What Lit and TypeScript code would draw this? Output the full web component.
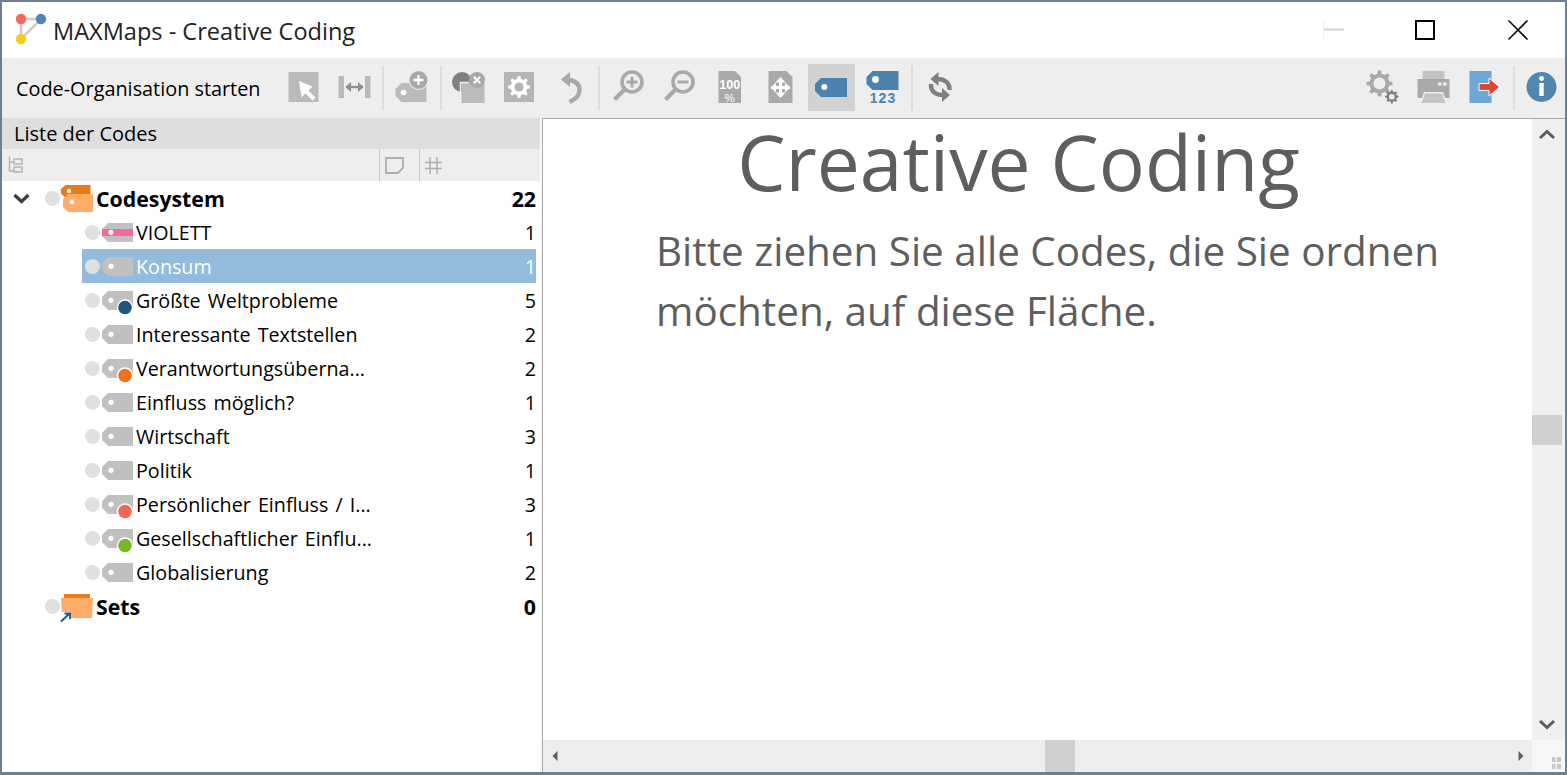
import { LitElement, html, svg, css } from "lit";
import { customElement } from "lit/decorators.js";

function gear(cx: number, cy: number, ro: number, ri: number, teeth: number): string {
  const pts: string[] = [];
  const step = (Math.PI * 2) / teeth;
  for (let i = 0; i < teeth; i++) {
    const a = i * step - Math.PI / 2;
    const offs: [number, number][] = [[-0.27, ri], [-0.17, ro], [0.17, ro], [0.27, ri]];
    for (const [o, r] of offs) {
      const t = a + o * step;
      pts.push(`${(cx + Math.cos(t) * r).toFixed(2)},${(cy + Math.sin(t) * r).toFixed(2)}`);
    }
  }
  return pts.join(" ");
}

const TAG = "M6 0H31V19H6L0 13V6Z";

type Row = { name: string; n: number; dot?: string; stripe?: string; sel?: boolean };
const rows: Row[] = [
  { name: "VIOLETT", n: 1, stripe: "#ee6a9f" },
  { name: "Konsum", n: 1, sel: true },
  { name: "Größte Weltprobleme", n: 5, dot: "#1f5582" },
  { name: "Interessante Textstellen", n: 2 },
  { name: "Verantwortungsüberna...", n: 2, dot: "#ee7218" },
  { name: "Einfluss möglich?", n: 1 },
  { name: "Wirtschaft", n: 3 },
  { name: "Politik", n: 1 },
  { name: "Persönlicher Einfluss / I...", n: 3, dot: "#f26852" },
  { name: "Gesellschaftlicher Einflu...", n: 1, dot: "#76b82a" },
  { name: "Globalisierung", n: 2 },
];

@customElement("app-root")
export class AppRoot extends LitElement {
  static styles = css`
    :host { display: block; width: 100%; height: 100vh; overflow: hidden; background: #fff; }
    * { box-sizing: border-box; }
    svg { display: block; overflow: visible; }
    .win {
      height: 100vh; display: flex; flex-direction: column;
      border: 2px solid #6f7f93; border-bottom-width: 3px;
      font-family: "Open Sans", "Noto Sans", sans-serif; color: #000; background: #fff;
    }
    .titlebar { height: 56px; flex: none; display: flex; align-items: center; background: #fff; }
    .logo { margin-left: 12px; width: 36px; height: 36px; flex: none; }
    .title { margin-left: 3px; font-size: 23.55px; color: #222; flex: 1; margin-top: 1px; }
    .wbtns { display: flex; align-items: center; margin-right: 37px; }
    .wbtn { width: 20px; height: 20px; }
    .wbtn.min { margin-right: 71px; }
    .wbtn.max { margin-right: 73px; }
    .toolbar {
      height: 60px; flex: none; background: #eeeeee; display: flex; align-items: center;
      padding-right: 0.5px; padding-bottom: 1px;
    }
    .tool-label { width: 277.5px; padding-left: 14px; font-size: 19.85px; flex: none; white-space: nowrap; margin-top: 2px; }
    .grp { display: flex; flex: none; }
    .g50 { gap: 3px; }
    .g505 { gap: 3.5px; }
    .g51 { gap: 4px; }
    .tb { width: 47px; height: 47px; flex: none; }
    .tb.on { background: #d2d2d2; }
    .sep { width: 2px; height: 44px; margin: 0 4px 0 5px; background: #dedede; flex: none; }
    .sep.b { margin-right: 3px; }
    .spacer { flex: 1; }
    .body { flex: 1; display: flex; min-height: 0; }
    .left { width: 538px; flex: none; display: flex; flex-direction: column; }
    .panel-head { height: 31px; flex: none; background: #dedede; padding-left: 12px; display: flex; align-items: center; font-size: 20px; }
    .col-head { height: 32px; flex: none; background: #eeeeee; display: flex; align-items: stretch; }
    .col-tree { width: 377px; padding: 7px 0 0 6px; flex: none; }
    .col { border-left: 1px solid #c8c8c8; flex: none; }
    .col.note { width: 40px; padding: 8px 0 0 5px; }
    .col.hash { flex: 1; padding: 8px 0 0 5px; }
    .tree { flex: 1; padding-right: 4px; }
    .row { height: 34px; display: flex; align-items: center; font-size: 19.7px; word-spacing: 2px; white-space: nowrap; }
    .row.top { font-weight: 700; padding-left: 11px; font-size: 21.3px; }
    .row.sub { margin-left: 80px; padding-left: 3px; }
    .row.sel { background: #92bbdd; color: #fff; }
    .chev { width: 17px; flex: none; }
    .circ { width: 15px; height: 15px; border-radius: 50%; background: #e0e0e0; flex: none; }
    .top .circ { margin-left: 15px; }
    .top .noch { margin-left: 32px; }
    .ticon { width: 31px; height: 19px; flex: none; margin-left: 2px; }
    .ficon { width: 32px; height: 28px; flex: none; margin-left: 1px; margin-right: 3px; }
    .nm { margin-left: 3px; flex: 1; }
    .top .nm { margin-left: 0; }
    .n { text-align: right; }
    .gut { width: 2px; flex: none; background: #f9f9f9; }
    .main { flex: 1; min-width: 0; display: flex; flex-direction: column; border-left: 1px solid #a8a8a8; border-top: 1px solid #a8a8a8; }
    .mid { flex: 1; display: flex; min-height: 0; }
    .canvas { flex: 1; min-width: 0; color: #5e5e5e; }
    .h1 { font-size: 76.7px; line-height: 84px; text-align: center; padding-right: 38px; font-weight: 400; }
    .p { margin: 18px 0 0 113px; font-size: 40.4px; line-height: 60px; width: 860px; }
    .vs { width: 33px; flex: none; background: #f0f0f0; display: flex; flex-direction: column; align-items: center; justify-content: space-between; padding: 10px 3px 10px 0; }
    .vthumb { width: 30px; height: 30px; background: #d0d0d0; }
    .hbar { height: 32px; flex: none; display: flex; background: #eeeeee; }
    .hs { flex: 1; display: flex; align-items: center; justify-content: space-between; padding: 0 8px 0 9px; }
    .hthumb { width: 30px; height: 32px; background: #d0d0d0; position: relative; left: 22px; }
    .corner { width: 33px; flex: none; background: #f7f7f7; display: flex; align-items: flex-end; justify-content: flex-end; padding: 0 3px 3px 0; }
  `;

  private logo() {
    return html`<svg class="logo" viewBox="0 0 36 36">
      <path d="M7 7H27M7 7V27M27 7L7 27" stroke="#cdcdcd" stroke-width="2.5" fill="none"/>
      <circle cx="7" cy="7" r="5.2" fill="#f2685a"/>
      <circle cx="27" cy="7" r="5.2" fill="#4f86b5"/>
      <circle cx="7" cy="27" r="5.2" fill="#f2cd1c"/>
    </svg>`;
  }

  private zoomIcon(plus: boolean) {
    return html`<svg class="tb" viewBox="0 0 47 47">
      <circle cx="28" cy="18" r="10" fill="none" stroke="#a9a9a9" stroke-width="3.6"/>
      <path d="M21 25L10.5 35.5" stroke="#a9a9a9" stroke-width="4.2"/>
      <path d="${plus ? "M22.5 18H33.5M28 12.5V23.5" : "M22.5 18H33.5"}" stroke="#a9a9a9" stroke-width="3"/>
    </svg>`;
  }

  private toolbar() {
    return html`<div class="toolbar">
      <div class="tool-label">Code-Organisation starten</div>
      <div class="grp g50">
        <svg class="tb" viewBox="0 0 47 47">
          <rect x="8.5" y="8" width="30" height="30" fill="#bababa"/>
          <path d="M19 17L21.5 33.5L25.5 29.5L32.5 36.5L35.5 33.5L28.5 26.5L32.5 22.5Z" fill="#fff"/>
        </svg>
        <svg class="tb" viewBox="0 0 47 47">
          <rect x="8.5" y="12" width="5.5" height="22" fill="#b9b9b9"/>
          <rect x="35" y="12" width="5.5" height="22" fill="#b9b9b9"/>
          <path d="M16 23H33" stroke="#8f8f8f" stroke-width="2.4"/>
          <path d="M15.5 23L21 18V28ZM33.5 23L28 18V28Z" fill="#8f8f8f"/>
        </svg>
      </div>
      <div class="sep"></div>
      <svg class="tb" viewBox="0 0 47 47">
        <path d="M13.5 19H38.5V38H13.5L7.5 32V25Z" fill="#bbbbbb"/>
        <circle cx="15.5" cy="28.5" r="2.8" fill="#fff"/>
        <circle cx="30.5" cy="16" r="10" fill="#eeeeee"/>
        <circle cx="30.5" cy="16" r="9" fill="#a9a9a9"/>
        <path d="M25.5 16H35.5M30.5 11V21" stroke="#fff" stroke-width="2.4"/>
      </svg>
      <div class="sep b"></div>
      <div class="grp g505">
        <svg class="tb" viewBox="0 0 47 47">
          <circle cx="17" cy="18" r="10" fill="#808080"/>
          <path d="M16.5 39V19H39.5V39Z" fill="#bbbbbb"/>
          <path d="M15.5 28V18.5H24" stroke="#eeeeee" stroke-width="1.5" fill="none"/>
          <circle cx="32" cy="16" r="8" fill="#a9a9a9"/>
          <path d="M28.8 12.8L35.2 19.2M35.2 12.8L28.8 19.2" stroke="#fff" stroke-width="2"/>
        </svg>
        <svg class="tb" viewBox="0 0 47 47">
          <rect x="9" y="8" width="30" height="30" fill="#b5b5b5"/>
          <polygon points="${gear(24, 23, 11, 8.4, 8)}" fill="#fff"/>
          <circle cx="24" cy="23" r="4.6" fill="#b5b5b5"/>
        </svg>
        <svg class="tb" viewBox="0 0 47 47">
          <path d="M19 15.5C29 16 33.5 20 33.5 26C33.5 32 29 35.5 23.5 38" stroke="#a9a9a9" stroke-width="4.4" fill="none"/>
          <path d="M15 15.5L24 8V23Z" fill="#a9a9a9"/>
        </svg>
      </div>
      <div class="sep"></div>
      <div class="grp g51">
        ${this.zoomIcon(true)}
        ${this.zoomIcon(false)}
        <svg class="tb" viewBox="0 0 47 47">
          <path d="M12.5 7H29L35 13V39H12.5Z" fill="#a9a9a9"/>
          <text x="23.7" y="25" text-anchor="middle" textLength="21" lengthAdjust="spacingAndGlyphs" font-family="Liberation Sans" font-weight="700" font-size="13" fill="#fff">100</text>
          <text x="23.7" y="37.5" text-anchor="middle" font-family="Liberation Sans" font-size="11.5" fill="#fff">%</text>
        </svg>
        <svg class="tb" viewBox="0 0 47 47">
          <path d="M11.5 7H29.5L35.5 13V39H11.5Z" fill="#a9a9a9"/>
          <path d="M23.5 14V33M14 23.5H33" stroke="#fff" stroke-width="3"/>
          <path d="M23.5 13L18.5 18.5H28.5ZM23.5 34L18.5 28.5H28.5ZM13.5 23.5L19 18.5V28.5ZM33.5 23.5L28 18.5V28.5Z" fill="#fff"/>
        </svg>
        <svg class="tb on" viewBox="0 0 47 47">
          <path d="M13 14H39V33H13L7 27V20Z" fill="#4d82ae"/>
          <circle cx="16.3" cy="23" r="3" fill="#fff"/>
        </svg>
        <svg class="tb" viewBox="0 0 47 47">
          <path d="M13.5 7H39.5V26H13.5L7.5 20V13Z" fill="#4d82ae"/>
          <circle cx="16.5" cy="15.5" r="3.4" fill="#fff"/>
          <text x="24" y="39" text-anchor="middle" font-family="Liberation Sans" font-weight="700" font-size="14" letter-spacing="1" fill="#4d82ae">123</text>
        </svg>
      </div>
      <div class="sep b"></div>
      <svg class="tb" viewBox="0 0 47 47">
        <path d="M21 15C29 15 34 19 33.5 26" stroke="#808080" stroke-width="4.4" fill="none"/>
        <path d="M14.5 15L22.5 8V22Z" fill="#808080"/>
        <path d="M27 31C19 31 14.5 27 15 20" stroke="#808080" stroke-width="4.4" fill="none"/>
        <path d="M34 31L26 24V38Z" fill="#808080"/>
      </svg>
      <div class="spacer"></div>
      <div class="grp g51">
        <svg class="tb" viewBox="0 0 47 47">
          <polygon points="${gear(20.5, 19.5, 13, 10, 8)}" fill="#a9a9a9"/>
          <circle cx="20.5" cy="19.5" r="6" fill="#eeeeee"/>
          <polygon points="${gear(32.8, 32.7, 6.8, 5.2, 8)}" fill="#808080"/>
          <circle cx="32.8" cy="32.7" r="2.8" fill="#eeeeee"/>
        </svg>
        <svg class="tb" viewBox="0 0 47 47">
          <rect x="12.5" y="7" width="22" height="8" fill="#c4c4c4"/>
          <rect x="7.5" y="15" width="32" height="19" fill="#a9a9a9"/>
          <rect x="28" y="18.5" width="3.5" height="3" fill="#eeeeee"/>
          <rect x="33" y="18.5" width="3.5" height="3" fill="#eeeeee"/>
          <path d="M14 28H33L37 39H10Z" fill="#eeeeee"/>
          <path d="M15 29.5H32L35.5 39H11.5Z" fill="#c4c4c4"/>
        </svg>
        <svg class="tb" viewBox="0 0 47 47">
          <rect x="8.5" y="7" width="22" height="32" fill="#6ea6d5"/>
          <path d="M18 19.5H28V14L38.5 23L28 32V26.5H18Z" fill="#e2452f" stroke="#fff" stroke-width="1"/>
        </svg>
      </div>
      <div class="sep b"></div>
      <svg class="tb" viewBox="0 0 47 47">
        <circle cx="23.5" cy="23" r="15" fill="#5285b0"/>
        <circle cx="23.5" cy="14.5" r="2.4" fill="#fff"/>
        <rect x="21.3" y="19" width="4.4" height="13" fill="#fff"/>
      </svg>
    </div>`;
  }

  private rowIcon(r: Row) {
    return html`<svg class="ticon" viewBox="0 0 31 19">
      <path d="${TAG}" fill="#c0c0c0"/>
      ${r.stripe ? svg`<rect y="6" width="31" height="7" fill="${r.stripe}"/>` : ""}
      <circle cx="9" cy="9.3" r="2.6" fill="#fff"/>
      ${r.dot ? svg`<circle cx="23" cy="16.5" r="8.2" fill="#fff"/><circle cx="23" cy="16.5" r="6.8" fill="${r.dot}"/>` : ""}
    </svg>`;
  }

  render() {
    return html`<div class="win">
      <div class="titlebar">
        ${this.logo()}
        <div class="title">MAXMaps - Creative Coding</div>
        <div class="wbtns">
          <svg class="wbtn min" viewBox="0 0 20 20">
            <path d="M-0.5 0V20" stroke="#f0f0f0" stroke-width="1"/>
            <path d="M0 9.5H20" stroke="#cfcfcf" stroke-width="2"/>
          </svg>
          <svg class="wbtn max" viewBox="0 0 20 20"><rect x="1" y="1" width="18" height="18" fill="none" stroke="#000" stroke-width="2"/></svg>
          <svg class="wbtn" viewBox="0 0 20 20"><path d="M0.5 0.5L19.5 19.5M19.5 0.5L0.5 19.5" stroke="#111" stroke-width="1.6"/></svg>
        </div>
      </div>
      ${this.toolbar()}
      <div class="body">
        <div class="left">
          <div class="panel-head">Liste der Codes</div>
          <div class="col-head">
            <div class="col-tree">
              <svg width="16" height="17" viewBox="0 0 16 17"><path d="M1.5 0.5V15H6M1.5 6H6" fill="none" stroke="#b3b3b3" stroke-width="1.4"/><rect x="6" y="3" width="8" height="5" fill="none" stroke="#b3b3b3" stroke-width="1.4"/><rect x="6" y="11" width="8" height="5" fill="none" stroke="#b3b3b3" stroke-width="1.4"/></svg>
            </div>
            <div class="col note">
              <svg width="20" height="17" viewBox="0 0 20 17"><path d="M1 1H18V11L13 16H1Z" fill="none" stroke="#adadad" stroke-width="1.8"/></svg>
            </div>
            <div class="col hash">
              <svg width="17" height="17" viewBox="0 0 17 17"><path d="M5 0V17M12 0V17M0 5.5H17M0 11.5H17" stroke="#adadad" stroke-width="1.4"/></svg>
            </div>
          </div>
          <div class="tree">
            <div class="row top">
              <svg class="chev" width="17" height="11" viewBox="0 0 17 11"><path d="M1.5 2L8.5 8.5L15.5 2" fill="none" stroke="#3d3d3d" stroke-width="3.2"/></svg>
              <div class="circ"></div>
              <svg class="ficon" viewBox="0 0 32 28">
                <path d="M4.5 1H29.5V14H4.5L0 9.5V5Z" fill="#e97b19"/>
                <circle cx="8" cy="7" r="2.3" fill="#fff"/>
                <path d="M7 10H32V28H7L2 23V15Z" fill="#ffad66"/>
                <circle cx="11" cy="18" r="2.4" fill="#fff"/>
              </svg>
              <div class="nm">Codesystem</div>
              <div class="n">22</div>
            </div>
            ${rows.map(
              (r) => html`<div class="row sub ${r.sel ? "sel" : ""}">
                <div class="circ"></div>
                ${this.rowIcon(r)}
                <div class="nm">${r.name}</div>
                <div class="n">${r.n}</div>
              </div>`
            )}
            <div class="row top">
              <div class="circ noch"></div>
              <svg class="ficon" viewBox="0 0 32 28">
                <path d="M3 2H29V8H3Z" fill="#e97b19"/>
                <path d="M0 6H32L31 26H1Z" fill="#ffad66"/>
                <path d="M-1 20H9V31H-1Z" fill="#fff"/>
                <path d="M0 29.5L8.5 21.5M3.5 21.5H9V27" fill="none" stroke="#1f5582" stroke-width="1.8"/>
              </svg>
              <div class="nm">Sets</div>
              <div class="n">0</div>
            </div>
          </div>
        </div>
        <div class="gut"></div>
        <div class="main">
          <div class="mid">
            <div class="canvas">
              <div class="h1">Creative Coding</div>
              <div class="p">Bitte ziehen Sie alle Codes, die Sie ordnen möchten, auf diese Fläche.</div>
            </div>
            <div class="vs">
              <svg width="18" height="11" viewBox="0 0 18 11"><path d="M2 9L9 2.5L16 9" fill="none" stroke="#5a5a5a" stroke-width="3"/></svg>
              <div class="vthumb"></div>
              <svg width="18" height="11" viewBox="0 0 18 11"><path d="M2 2L9 8.5L16 2" fill="none" stroke="#5a5a5a" stroke-width="3"/></svg>
            </div>
          </div>
          <div class="hbar">
            <div class="hs">
              <svg width="6" height="10" viewBox="0 0 6 10"><path d="M5.5 0V10L0.5 5Z" fill="#5f5f5f"/></svg>
              <div class="hthumb"></div>
              <svg width="6" height="10" viewBox="0 0 6 10"><path d="M0.5 0V10L5.5 5Z" fill="#5f5f5f"/></svg>
            </div>
            <div class="corner">
              <svg width="10" height="12" viewBox="0 0 10 12"><path d="M0 5H3.5V0H0ZM5 5H9V0H5ZM0 12H3.5V7H0ZM5 12H9V7H5Z" fill="#c8c8c8"/></svg>
            </div>
          </div>
        </div>
      </div>
    </div>`;
  }
}
